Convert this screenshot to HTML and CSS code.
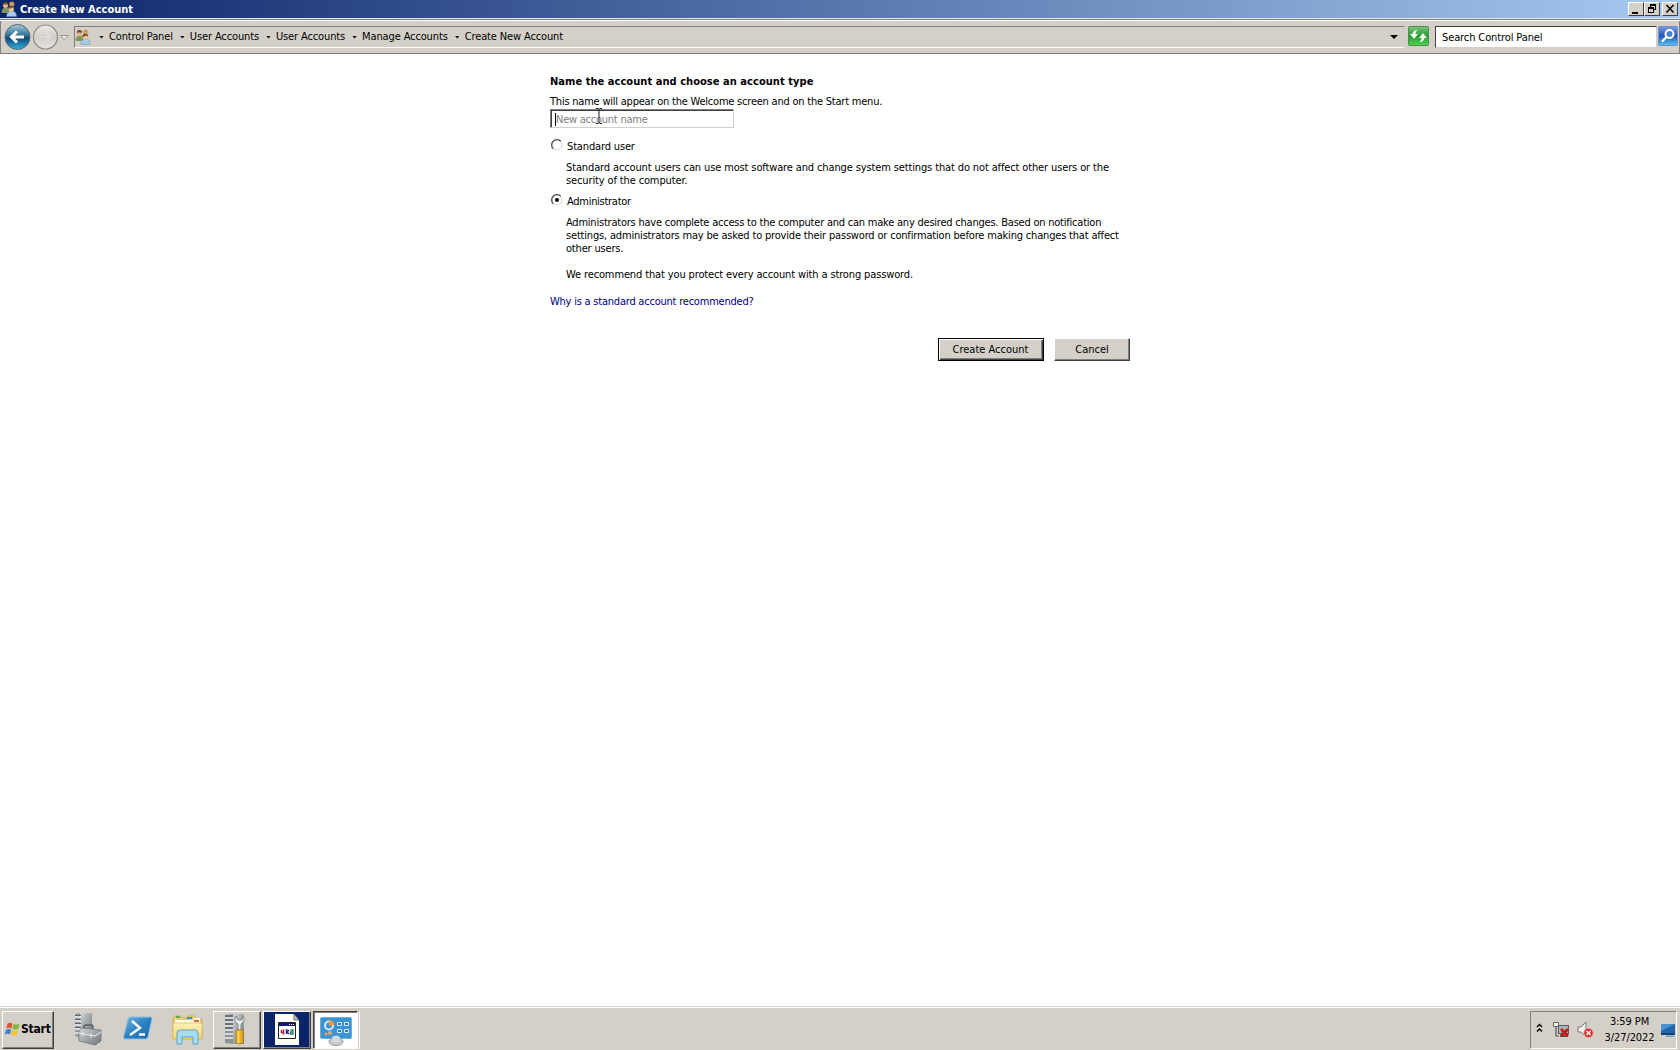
FILE: index.html
```
<!DOCTYPE html>
<html lang="en">
<head>
  <meta charset="UTF-8">
  <title>Create New Account</title>
  <link rel="stylesheet" href="styles.css">
</head>
<body>
  <svg class="defs" width="0" height="0">
    <defs>
      <linearGradient id="blueBall" x1="0" y1="0" x2="0" y2="1">
        <stop offset="0" stop-color="#a9c9d8"/><stop offset=".45" stop-color="#2a7195"/>
        <stop offset=".55" stop-color="#0c4a78"/><stop offset="1" stop-color="#35b5e2"/>
      </linearGradient>
      <linearGradient id="grayBall" x1="0" y1="0" x2="0" y2="1">
        <stop offset="0" stop-color="#eceae6"/><stop offset=".5" stop-color="#d2cfc9"/><stop offset="1" stop-color="#e6e4e0"/>
      </linearGradient>
      <linearGradient id="green" x1="0" y1="0" x2="0" y2="1">
        <stop offset="0" stop-color="#79c67c"/><stop offset=".5" stop-color="#279a34"/><stop offset="1" stop-color="#4fd44a"/>
      </linearGradient>
      <linearGradient id="blueBox" x1="0" y1="0" x2="0" y2="1">
        <stop offset="0" stop-color="#7a9be0"/><stop offset=".5" stop-color="#2456b8"/><stop offset="1" stop-color="#55c4f0"/>
      </linearGradient>
      <linearGradient id="shell" x1="0" y1="0" x2="1" y2="1">
        <stop offset="0" stop-color="#72b7e4"/><stop offset=".5" stop-color="#2b82c4"/><stop offset="1" stop-color="#1d68a8"/>
      </linearGradient>
      <linearGradient id="metal" x1="0" y1="0" x2="1" y2="1">
        <stop offset="0" stop-color="#d4d7d8"/><stop offset="1" stop-color="#6d7478"/>
      </linearGradient>
      <linearGradient id="folder" x1="0" y1="0" x2="0" y2="1">
        <stop offset="0" stop-color="#fdf3b4"/><stop offset="1" stop-color="#f0d372"/>
      </linearGradient>
      <symbol id="users" viewBox="0 0 16 16">
        <path d="M0.5 11 Q1 6.500 5 6.500 Q9 6.500 9 11 L8 12 H1z" fill="#7d9a5a"/>
        <circle cx="4.500" cy="4.300" r="2.600" fill="#e5b58c"/>
        <path d="M2 4 Q1.500 1 4.500 1 Q7.500 1 7 4 Q5 2.500 2 4" fill="#6b4a2a"/>
        <circle cx="10.800" cy="3.500" r="2.300" fill="#dca77c"/>
        <path d="M8.300 4 Q8 .5 11 .5 Q14 1 13.200 4 L12 2.500z" fill="#c99a4e"/>
        <path d="M5.500 15.500 Q6 10 10.500 10 Q15.500 10 15.500 15.500z" fill="#a9c8ea" stroke="#6c91bd" stroke-width=".5"/>
        <circle cx="10.300" cy="7.800" r="2.800" fill="#eec49c"/>
        <path d="M7.500 8 Q7 4.600 10.300 4.600 Q13.600 4.800 13 8.500 L12 6.500z" fill="#755335"/>
      </symbol>
    </defs>
  </svg>

  <div class="titlebar">
    <svg class="title-icon" width="16" height="16"><use href="#users"/></svg>
    <span class="title-text">Create New Account</span>
    <div class="window-buttons">
      <span class="win-btn"><svg width="14" height="12"><path d="M3 9h6v2H3z"/></svg></span>
      <span class="win-btn"><svg width="14" height="12"><path d="M5 1h6v6H9V6h1V3H6v1H5zM3 4h6v6H3zm1 2v3h4V6z" fill-rule="evenodd"/></svg></span>
      <span class="win-btn close"><svg width="14" height="12"><path d="M3.500 2l7 7.500M10.500 2l-7 7.500" stroke="#000" stroke-width="1.600"/></svg></span>
    </div>
  </div>

  <div class="navbar">
    <svg class="nav-balls" width="70" height="30">
      <circle cx="17.500" cy="15" r="12.500" fill="url(#blueBall)" stroke="#53646d"/>
      <path d="M24 15H12M17 9.500L11.500 15l5.500 5.500" fill="none" stroke="#fff" stroke-width="3"/>
      <circle cx="45.500" cy="15" r="12" fill="url(#grayBall)" stroke="#8d8b87" stroke-width="1.200"/>
      <path d="M40 15h10M46 10.500l4.500 4.500l-4.500 4.500" fill="none" stroke="#dedcd8" stroke-width="2"/>
      <path d="M60.500 13.500h7.500l-3.750 4z" fill="#f2f1ee" stroke="#85827c" stroke-width=".8"/>
    </svg>
    <div class="address">
      <svg width="16" height="16"><use href="#users"/></svg>
      <i class="arrow first"></i><span>Control Panel</span>
      <i class="arrow"></i><span>User Accounts</span>
      <i class="arrow"></i><span>User Accounts</span>
      <i class="arrow"></i><span>Manage Accounts</span>
      <i class="arrow"></i><span>Create New Account</span>
      <i class="arrow dropdown"></i>
    </div>
    <svg class="refresh" width="21" height="20">
      <rect x=".5" y=".5" width="20" height="19" rx="1" fill="url(#green)" stroke="#4c8d50"/>
      <path d="M2 8h2.500Q5 4 9.500 4Q7.500 5.500 7.500 8H10l-4 5z" fill="#f4fff2"/>
      <path d="M19 12h-2.500Q16 16 11.500 16Q13.500 14.500 13.500 12H11l4-5z" fill="#f4fff2"/>
    </svg>
    <div class="search">Search Control Panel</div>
    <svg class="search-btn" width="20" height="20">
      <rect x=".5" y=".5" width="19" height="19" rx="1" fill="url(#blueBox)" stroke="#718fc8"/>
      <circle cx="11.500" cy="8" r="4" fill="#4d7fd0" stroke="#fff" stroke-width="2"/>
      <path d="M8.500 11L4 15.500" stroke="#fff" stroke-width="2.400"/>
    </svg>
  </div>

  <main class="content">
    <h1>Name the account and choose an account type</h1>
    <p class="hint">This name will appear on the Welcome screen and on the Start menu.</p>
    <div class="name-input">
      <span class="caret"></span><span class="placeholder">New account name</span>
      <svg class="ibeam" width="8" height="17"><path d="M1 .5h2.500M4.500 .5H7M1 15.500h2.500M4.500 15.500H7M4 1v14" fill="none" stroke="#222"/></svg>
    </div>

    <div class="option standard">
      <svg class="radio" width="12" height="12"><circle cx="6" cy="6" r="5" fill="#fff" stroke="#d8d5cf"/><path d="M2.200 9.800A5.300 5.300 0 0 1 9.800 2.200" fill="none" stroke="#555" stroke-width="1.300"/></svg>
      <span>Standard user</span>
    </div>
    <p class="desc">Standard account users can use most software and change system settings that do not affect other users or the<br>security of the computer.</p>

    <div class="option admin">
      <svg class="radio" width="12" height="12"><circle cx="6" cy="6" r="5" fill="#fff" stroke="#d8d5cf"/><path d="M2.200 9.800A5.300 5.300 0 0 1 9.800 2.200" fill="none" stroke="#555" stroke-width="1.300"/><circle cx="6" cy="6" r="2"/></svg>
      <span>Administrator</span>
    </div>
    <p class="desc admin-desc"><span class="tight">Administrators have complete access to the computer and can make any desired changes. Based on notification</span><br>settings, administrators may be asked to provide their password or confirmation before making changes that affect<br>other users.</p>
    <p class="desc recommend">We recommend that you protect every account with a strong password.</p>
    <a class="why">Why is a standard account recommended?</a>

    <div class="actions">
      <button type="button" class="btn default">Create Account</button>
      <button type="button" class="btn cancel">Cancel</button>
    </div>
  </main>

  <footer class="taskbar">
    <div class="start">
      <svg width="16" height="16">
        <path d="M2.500 2.500Q5 1 7.500 2.500L6.500 7.500Q4 6 1.300 7.500z" fill="#e5532d"/>
        <path d="M8.500 3Q11.500 4.300 14.500 2.800L13.300 8Q10.500 9 7.500 7.800z" fill="#7fb93c"/>
        <path d="M1 8.700Q3.500 7.300 6.200 8.700L5 13.500Q2.500 12-.2 13.500z" fill="#4381d0"/>
        <path d="M7.200 9Q10 10.200 13 9L11.800 14Q9 15 6 13.900z" fill="#f5c32e"/>
      </svg>
      <span>Start</span>
    </div>
    <!-- quick launch -->
    <svg class="launch" width="32" height="34">
      <path d="M3 2l5-1v25l-5-2z" fill="#989da0"/><path d="M8 1h12v24H8z" fill="url(#metal)"/>
      <path d="M3 5h6M3 9h6M3 13h6M3 17h6M3 21h6" stroke="#eef0f1" stroke-width="1.500"/>
      <path d="M3 3.500h6M3 7.500h6M3 11.500h6M3 15.500h6" stroke="#4b5053" stroke-width=".8"/>
      <path d="M12 17v-2q0-2 2-2h5q2 0 2 2v3" fill="none" stroke="#555c61" stroke-width="1.500"/>
      <path d="M7 19l3-3 19 2v11l-6 4-16-4z" fill="url(#metal)" stroke="#697075" stroke-width=".7"/>
      <path d="M7 21l16 3 6-4M11 20v4M19 21v5" fill="none" stroke="#eceff1"/>
    </svg>
    <svg class="launch" width="32" height="34">
      <path d="M8.500 5h20q2 0 1.500 2l-4 18q-.5 2-2.500 2H3q-2 0-1.500-2l4.500-18q.5-2 2.500-2z" fill="url(#shell)" stroke="#8dc3e6"/>
      <path d="M10 9l8 7-10 7M17 22.500h6" fill="none" stroke="#fff" stroke-width="2.400"/>
    </svg>
    <svg class="launch last" width="32" height="34">
      <path d="M1 7l1-3h7l1 2h5l1-2h7l1 3h6v20H1z" fill="#e9cf78" stroke="#c5a54c" stroke-width=".7"/>
      <path d="M3 8h19v-2h6v8H3z" fill="#fffbe6"/><path d="M4 5h4" stroke="#62a752" stroke-width="2"/><path d="M15 6h5" stroke="#4789c4" stroke-width="2"/><path d="M22 9h5" stroke="#d76649" stroke-width="2"/>
      <path d="M1 11h29v16H1z" fill="url(#folder)" stroke="#d6b75d" stroke-width=".7"/>
      <path d="M5 32V21q0-3 3-3h15q3 0 3 3v11h-5v-7H10v7z" fill="#a8dcf2" stroke="#59a5c9"/>
    </svg>
    <!-- running programs -->
    <div class="task">
      <svg width="32" height="34">
        <path d="M4 2l8-1v30l-8-1z" fill="#8b9296"/><path d="M12 1h11v30H12z" fill="url(#metal)"/>
        <path d="M4 5h8M4 9h8M4 13h8M4 17h8M4 21h8M4 25h8" stroke="#eef1f2" stroke-width="1.500"/>
        <path d="M4 3h8M4 7h8M4 11h8M4 15h8" stroke="#485055"/>
        <path d="M15 3q-3 6 2 8v6h3v-6q5-3 2-8l-1 4h-4z" fill="#e8ebec" stroke="#6f787d" stroke-width=".8"/>
        <path d="M15 17h7v13q-3.500 2-7 0z" fill="#f0ad16" stroke="#a67912" stroke-width=".7"/><path d="M17.500 18v12" stroke="#ffe385" stroke-width="1.500"/>
      </svg>
    </div>
    <div class="task navy">
      <svg width="26" height="34">
        <path d="M1 1h19l5 6v25H1z" fill="#fff"/><path d="M20 1v6h5z" fill="#c9c9c9" stroke="#333" stroke-width=".7"/>
        <path d="M4.500 9.500h17v16h-17z" fill="#fff" stroke="#222"/><path d="M5 10h16v3H5z" fill="#151576"/>
        <path d="M15 11.500h1M17 11.500h1M19 11.500h1" stroke="#fff"/>
        <path d="M7.500 17v2.500h2M9.500 16.500v5" stroke="#b01840" stroke-width="1.500" fill="none"/>
        <path d="M12.500 16v5M15 17l-2 2 2 2" stroke="#2a2a90" stroke-width="1.500" fill="none"/>
        <path d="M16.500 17h2.500v4h-2.500v-2h2.500" stroke="#278466" stroke-width="1.400" fill="none"/>
      </svg>
    </div>
    <div class="task active">
      <svg width="34" height="36">
        <rect x="1.500" y="5.500" width="31" height="21" rx="1" fill="#3c93d2" stroke="#6faedb"/>
        <circle cx="10" cy="13.500" r="4" fill="none" stroke="#d5ebf9" stroke-width="2"/><path d="M10 13.500V8a5 5 0 0 1 5 5z" fill="#f39b38"/>
        <path d="M18.500 10.500h4v3h-4zM25.500 10.500h4v3h-4zM18.500 17.500h4v3h-4zM25.500 17.500h4v3h-4z" fill="#2677b8" stroke="#d9effb"/>
        <circle cx="7" cy="22" r="1.500" fill="#f0a052"/><circle cx="11" cy="21" r="2" fill="#e2a36b"/>
        <ellipse cx="17" cy="29.500" rx="7" ry="4" fill="#c7cdd0" stroke="#92999d"/><path d="M13 25q4-3 8 0l-1 5h-6z" fill="#d4d9dc"/>
      </svg>
    </div>
    <div class="tray">
      <svg class="chevrons" width="7" height="10"><path d="M1 4l2.500-2.500L6 4M1 8.500L3.500 6 6 8.500" fill="none" stroke="#000" stroke-width="1.400"/></svg>
      <svg class="net" width="17" height="18">
        <path d="M3 5v10h3" fill="none" stroke="#555" stroke-width="1.200"/><path d="M.5 1.500h5v4h-5z" fill="#f3f3f3" stroke="#666"/>
        <rect x="5.500" y="4.500" width="10" height="8" fill="#a9b4b8" stroke="#555d61"/><path d="M7 15h8" stroke="#555" stroke-width="2"/>
        <path d="M8 8l7 7M15 8l-7 7" stroke="#c31818" stroke-width="2.600"/>
      </svg>
      <svg class="sound" width="17" height="18">
        <path d="M1 6h3l5-5v15l-5-5H1z" fill="#f1f1f1" stroke="#777"/>
        <circle cx="11.500" cy="12" r="4.800" fill="#d93434" stroke="#efb5ac"/><path d="M9.500 10l4 4M13.500 10l-4 4" stroke="#fff" stroke-width="1.400"/>
      </svg>
      <div class="clock"><div class="time">3:59 PM</div><div class="date">3/27/2022</div></div>
      <svg class="desktop" width="15" height="15"><path d="M0 1h14v9H0z" fill="#2265ad"/><path d="M0 1h14L0 8z" fill="#4b92cf"/><path d="M0 10h14v2H0z" fill="#173e70"/><path d="M5 12.500h8v1.500H5z" fill="#6b9bc4"/></svg>
    </div>
  </footer>
</body>
</html>
```
FILE: styles.css
```
* { box-sizing: border-box; }
body {
  margin: 0;
  width: 1680px;
  height: 1050px;
  overflow: hidden;
  display: flex;
  flex-direction: column;
  background: #fff;
  color: #000;
  font: 11px/13px "DejaVu Sans Condensed", "DejaVu Sans", sans-serif;
  white-space: nowrap;
}
h1, p { margin: 0; }
svg { display: block; flex: none; }
.defs { position: absolute; }

/* title bar */
.titlebar {
  flex: none;
  height: 18px;
  display: flex;
  align-items: center;
  padding: 0 2px 0 1px;
  background: linear-gradient(90deg, #0a246a, #a6caf0);
}
.title-text { margin-left: 3px; color: #fff; font-weight: bold; }
.window-buttons { margin-left: auto; display: flex; }
.win-btn {
  width: 16px;
  height: 14px;
  background: #d4d0c8;
  border: 1px solid;
  border-color: #fff #404040 #404040 #fff;
}
.win-btn.close { margin-left: 2px; }

/* navigation */
.navbar {
  flex: none;
  height: 36px;
  display: flex;
  background: #d4d0c8;
  border-top: 1px solid #e8e6e2;
  border-bottom: 1px solid #808080;
  box-shadow: inset 0 1px #808080, inset 0 2px #fff, inset 1px 0 #808080, inset -1px 0 #808080;
}
.nav-balls { margin-top: 3px; }
.address {
  width: 1331px;
  height: 22px;
  margin: 7px 0 0 4px;
  display: flex;
  align-items: center;
  border: 1px solid;
  border-color: #808080 #d4d0c8 #fff #808080;
}
.address span { letter-spacing: -.13px; padding-bottom: 1px; }
.arrow {
  width: 5px;
  height: 3px;
  margin: 0 5px 0 7px;
  background: #000;
  clip-path: polygon(0 0, 100% 0, 50% 100%);
}
.arrow.first { margin-left: 8px; }
.arrow.dropdown { width: 8px; height: 4px; margin: 0 6px 0 auto; }
.refresh { margin: 7px 0 0 3px; }
.search {
  width: 222px;
  height: 22px;
  margin: 7px 0 0 6px;
  padding: 4px 6px;
  background: #fff;
  border: 1px solid;
  border-color: #404040 #d4d0c8 #d4d0c8 #404040;
  letter-spacing: -.11px;
}
.search-btn { margin: 7px 0 0 1px; }

/* form */
.content {
  flex: 1;
  width: 580px;
  margin-left: 550px;
  padding-top: 21px;
}
h1 { font-size: 11px; line-height: 13px; letter-spacing: .05px; }
.hint { margin-top: 7px; letter-spacing: -.22px; }
.name-input {
  position: relative;
  width: 184px;
  height: 19px;
  margin-top: 1px;
  padding: 3px 4px 1px;
  display: flex;
  align-items: center;
  border: 1px solid;
  border-color: #808080 #d4d0c8 #d4d0c8 #808080;
  box-shadow: inset 1px 1px #404040;
}
.caret { width: 1px; height: 13px; background: #000; }
.placeholder { color: #808080; letter-spacing: -.24px; }
.ibeam { position: absolute; left: 44px; top: -2px; }
.option { display: flex; }
.option span { margin-left: 4px; }
.radio { margin-left: 1px; margin-top: -1px; }
.standard { margin-top: 12px; letter-spacing: -.15px; }
.admin { margin-top: 8px; letter-spacing: -.28px; }
.desc { margin: 8px 0 0 16px; letter-spacing: -.13px; }
.admin-desc { letter-spacing: -.18px; }
.tight { letter-spacing: -.22px; }
.recommend { margin-top: 13px; }
.why { display: block; margin-top: 14px; color: #000080; letter-spacing: -.22px; }
.actions { margin-top: 30px; display: flex; justify-content: flex-end; gap: 10px; }
.btn {
  width: 76px;
  height: 23px;
  padding: 0;
  background: #d4d0c8;
  border: 1px solid;
  border-color: #fff #404040 #404040 #fff;
  box-shadow: inset -1px -1px #808080;
  font: inherit;
}
.btn.default {
  width: 106px;
  padding-right: 1px;
  border-color: #000;
  box-shadow: inset 1px 1px #fff, inset -1px -1px #404040, inset -2px -2px #808080;
}

/* taskbar */
.taskbar {
  flex: none;
  height: 44px;
  display: flex;
  padding: 4px 3px 2px 2px;
  background: #d4d0c8;
  border-top: 1px solid #d4d0c8;
  box-shadow: inset 0 1px #fff;
}
.start {
  width: 52px;
  height: 38px;
  margin-right: 18px;
  padding: 0 0 2px 2px;
  display: flex;
  align-items: center;
  border: 1px solid;
  border-color: #fff #404040 #404040 #fff;
  box-shadow: inset -1px -1px #808080;
}
.start span { font-size: 12px; font-weight: bold; letter-spacing: -.2px; }
.launch { margin: 1px 18px 0 0; }
.launch.last { margin-right: 9px; }
.task {
  width: 48px;
  height: 38px;
  margin-right: 2px;
  display: flex;
  justify-content: center;
  padding-top: 1px;
  border: 1px solid;
  border-color: #fff #404040 #404040 #fff;
  box-shadow: inset -1px -1px #808080;
}
.task.navy { background: #0a246a; }
.task.active {
  width: 45px;
  padding-top: 0;
  background: #fff;
  border-color: #404040 #fff #fff #404040;
  box-shadow: inset 1px 1px #808080, 1px 0 #d4d0c8, 2px 0 #fff;
}
.tray {
  width: 147px;
  height: 38px;
  margin-left: auto;
  display: flex;
  align-items: center;
  padding-left: 5px;
  border: 1px solid;
  border-color: #808080 #fff #fff #808080;
}
.chevrons { margin-bottom: 4px; }
.net { margin-left: 10px; }
.sound { margin-left: 7px; }
.clock { width: 51px; margin-left: 10px; text-align: center; line-height: 16px; letter-spacing: -.1px; }
.desktop { margin-left: 6px; }
```
